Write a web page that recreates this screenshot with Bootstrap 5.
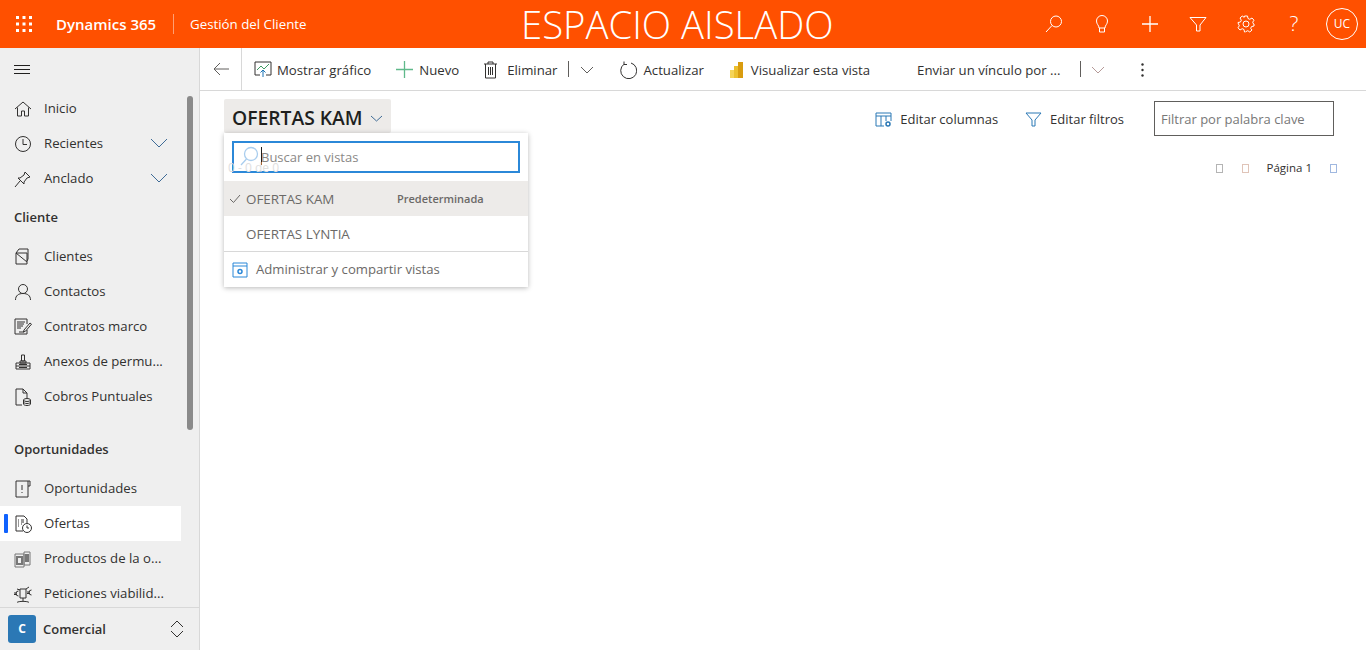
<!DOCTYPE html>
<html lang="es">
<head>
    <meta charset="UTF-8">
    <meta name="viewport" content="width=device-width, initial-scale=1.0">
    <title>Ofertas</title>
    <link href="https://cdn.jsdelivr.net/npm/bootstrap@5.3.0/dist/css/bootstrap.min.css" rel="stylesheet">
    <style>
        html, body { height: 100%; overflow: hidden; }
        body { font-family: "Open Sans", "Noto Sans", sans-serif; font-size: 13px; color: #323130; background: #fff; }
        svg { display: block; flex: none; fill: none; stroke: currentColor; stroke-width: 1; }
        .shell { height: 650px; }

        .topbar { height: 48px; background: #ff5000; color: #fff; flex: none; }
        .waffle { width: 48px; margin-right: 8px; }
        .brand { font-size: 15px; font-weight: 600; width: 117px; white-space: nowrap; }
        .brand-sep { width: 1px; height: 20px; background: rgba(255,255,255,.45); }
        .appname { font-size: 13.3px; margin-left: 16px; width: 331px; padding-top: 1px; white-space: nowrap; }
        .banner { font-size: 38.3px; font-weight: 300; line-height: 48px; white-space: nowrap; }
        .topicon { width: 48px; height: 48px; display: flex; align-items: center; justify-content: center; }
        .avatar { width: 32px; height: 32px; border: 1px solid #fff; border-radius: 50%; font-size: 12px; display: flex; align-items: center; justify-content: center; margin-left: 8px; }

        .sidebar { width: 200px; background: #efefef; border-right: 1px solid #d8d8d8; flex: none; position: relative; }
        .side-scroll { flex: 1; overflow: hidden; }
        .burger { height: 43px; padding-left: 14px; color: #201f1e; }
        .side-row { height: 35px; width: 181px; padding-left: 14px; font-size: 13.2px; color: #323130; position: relative; white-space: nowrap; }
        .side-row svg.ico { width: 20px; height: 20px; margin-right: 11px; margin-left: -1px; color: #323130; }
        .side-row .chev { position: absolute; right: 13px; top: 11px; color: #3f6b96; }
        .side-row.active { background: #fff; }
        .side-row.active::before { content: ""; position: absolute; left: 4px; top: 8px; width: 4px; height: 19px; background: #0f62fe; border-radius: 1px; }
        .side-head { font-weight: 600; font-size: 13px; padding-left: 14px; color: #323130; line-height: 18px; margin-bottom: 13px; }
        .side-thumb { position: absolute; left: 187px; top: 48px; width: 6px; height: 334px; background: #8a8a8a; border-radius: 3px; }
        .side-foot { height: 43px; border-top: 1px solid #d8d8d8; padding-left: 8px; flex: none; background: #efefef; }
        .area-tile { width: 28px; height: 28px; background: #2b78b5; color: #fff; font-weight: 700; font-size: 12px; border-radius: 3px; display: flex; align-items: center; justify-content: center; margin-right: 7px; }
        .area-name { font-weight: 600; font-size: 13px; color: #323130; padding-top: 1px; }

        .cmdbar { height: 43px; border-bottom: 1px solid #d8d8d8; flex: none; color: #323130; }
        .backbtn { width: 42px; height: 42px; border-right: 1px solid #d8d8d8; color: #605e5c; }
        .cmd { display: flex; align-items: center; height: 42px; white-space: nowrap; padding-top: 1px; font-size: 13.2px; }
        .cmd-label { padding-top: 3px; }
        .cmd-sep { width: 1px; height: 16px; background: #605e5c; }

        .viewbar { height: 46px; padding-left: 24px; position: relative; }
        .view-title { height: 34px; width: 167px; background: #edebe9; border-radius: 2px; padding-left: 8px; padding-top: 4px; margin-top: 8px; font-size: 19.3px; font-weight: 600; color: #201f1e; white-space: nowrap; }
        .tool { display: flex; align-items: center; color: #323130; white-space: nowrap; }
        .tool span { padding-top: 1px; }
        .kw-box { width: 180px; height: 35px; border: 1px solid #605e5c; padding: 2px 6px 0; font-size: 13px; color: #777; margin-left: 30px; margin-top: 10px; margin-right: 32px; }
        .pager-row { height: 30px; font-size: 11.5px; position: relative; z-index: 5; margin-top: 16px; padding-left: 28px; pointer-events: none; }
        .count { color: #dedede; font-size: 12px; }
        .tofu { display: inline-block; width: 7px; height: 9px; border: 1px solid #b4b4b4; }

        .views-menu { position: absolute; left: 224px; top: 133px; width: 304px; height: 154px; background: #fff; box-shadow: 0 1px 5px rgba(0,0,0,.28); z-index: 4; color: #6b6967; }
        .views-search { margin: 8px 8px 0; height: 32px; border: 2px solid #2b88d8; position: relative; padding-left: 27px; padding-top: 2px; color: #8a8886; font-size: 13px; }
        .views-search::before { content: ""; position: absolute; left: 27px; top: 4px; width: 1px; height: 18px; background: #201f1e; }
        .view-opt { height: 35px; padding-left: 22px; padding-top: 2px; position: relative; font-size: 13.4px; }
        .view-opt.current { background: #edebe9; margin-top: 8px; }
        .view-tag { position: absolute; left: 173px; font-size: 11px; font-weight: 600; }
        .menu-foot { border-top: 1px solid #d8d8d8; height: 36px; padding-left: 8px; padding-top: 1px; font-size: 13.15px; }
    </style>
</head>
<body>
<div class="shell d-flex flex-column">

    <header class="topbar d-flex align-items-center">
        <div class="waffle d-flex justify-content-center">
            <svg width="16" height="16" viewBox="0 0 16 16" style="stroke:none;fill:#fff">
                <rect x="0" y="0" width="3" height="3"/><rect x="6.5" y="0" width="3" height="3"/><rect x="13" y="0" width="3" height="3"/>
                <rect x="0" y="6.5" width="3" height="3"/><rect x="6.5" y="6.5" width="3" height="3"/><rect x="13" y="6.5" width="3" height="3"/>
                <rect x="0" y="13" width="3" height="3"/><rect x="6.5" y="13" width="3" height="3"/><rect x="13" y="13" width="3" height="3"/>
            </svg>
        </div>
        <div class="brand">Dynamics 365</div>
        <div class="brand-sep"></div>
        <div class="appname">Gestión del Cliente</div>
        <div class="banner">ESPACIO AISLADO</div>
        <div class="d-flex align-items-center ms-auto me-2">
            <div class="topicon"><svg width="20" height="20" viewBox="0 0 20 20"><circle cx="12" cy="7.500" r="5.500"/><path d="M8 11.500 2 18"/></svg></div>
            <div class="topicon"><svg width="20" height="20" viewBox="0 0 20 20"><path d="M7 14c0-3-2.500-3.500-2.500-7a5.500 5.500 0 0 1 11 0c0 3.500-2.500 4-2.500 7zM7.500 14v4h5v-4"/></svg></div>
            <div class="topicon"><svg width="18" height="18" viewBox="0 0 18 18" style="stroke-width:1.300"><path d="M9 1v16M1 9h16"/></svg></div>
            <div class="topicon"><svg width="18" height="18" viewBox="0 0 18 18"><path d="M1 2.500h16L11 10v6H7.500v-6z"/></svg></div>
            <div class="topicon"><svg width="18" height="18" viewBox="0 0 18 18"><circle cx="9" cy="9" r="3"/><path d="M7.500 1h3l.5 2.500 1.800.8L15 3l2 2.200-1.300 2 .8 1.800H17l0 2-2.500.6-.8 1.700L15 15l-2.200 2-2-1.300-1.800.8L8.500 17h-1l-.5-2.500-1.800-.8L3 15l-2-2.200 1.300-2-.8-1.800L1 8V7.500l2.500-.5.800-1.800L3 3l2.200-2 2 1.300z" stroke-linejoin="round"/></svg></div>
            <div class="topicon" style="font-size:21px;font-weight:300">?</div>
            <div class="avatar">UC</div>
        </div>
    </header>

    <div class="d-flex flex-grow-1" style="min-height:0">
        <nav class="sidebar d-flex flex-column">
            <div class="side-scroll">
                <div class="burger d-flex align-items-center">
                    <svg width="16" height="12" viewBox="0 0 16 12"><path d="M0 1.500h16M0 5.500h16M0 9.500h16"/></svg>
                </div>
                <div class="side-row d-flex align-items-center"><svg class="ico" viewBox="0 0 20 20"><path d="M2 10 10 3l8 7M4.500 8.500V17h4v-5h3v5h4V8.500"/></svg>Inicio</div>
                <div class="side-row d-flex align-items-center"><svg class="ico" viewBox="0 0 20 20"><circle cx="10" cy="10" r="7.500"/><path d="M10 5v5.500h4"/></svg>Recientes
                    <svg class="chev" width="18" height="12" viewBox="0 0 18 12"><path d="M1 2l8 8 8-8"/></svg></div>
                <div class="side-row d-flex align-items-center"><svg class="ico" viewBox="0 0 20 20"><path d="M12 3l5 5-3 1-3 4 0 2-6-6 2 0 4-3zM7 12l-5 6"/></svg>Anclado
                    <svg class="chev" width="18" height="12" viewBox="0 0 18 12"><path d="M1 2l8 8 8-8"/></svg></div>
                <div class="side-head" style="margin-top:12px">Cliente</div>
                <div class="side-row d-flex align-items-center"><svg class="ico" viewBox="0 0 20 20"><path d="M3 6h11v11H3zM3 6l3-4h9v10l-1 2M3 6l11 9"/></svg>Clientes</div>
                <div class="side-row d-flex align-items-center"><svg class="ico" viewBox="0 0 20 20"><circle cx="10" cy="7" r="4.500"/><path d="M2.500 18c0-4.500 3-6.500 7.500-6.500s7.500 2 7.500 6.500"/></svg>Contactos</div>
                <div class="side-row d-flex align-items-center"><svg class="ico" viewBox="0 0 20 20"><path d="M14 13v4H2V2h12v5M4 5h8M4 7h7M4 9h6M4 11h4M6 15h5M11 13l6-7 1.500 1.200-6 7-2 .8z"/></svg>Contratos marco</div>
                <div class="side-row d-flex align-items-center"><svg class="ico" viewBox="0 0 20 20"><path d="M8.500 3h3v6h-3zM7 9h6v2H7zM3 11h14v6H3zM3 14h14M6 12.500h8M6 15.500h8"/></svg>Anexos de permu...</div>
                <div class="side-row d-flex align-items-center"><svg class="ico" viewBox="0 0 20 20"><path d="M9 18H3V2h7l4 4v5M10 2v4h4"/><ellipse cx="14" cy="13" rx="3.500" ry="1.500"/><path d="M10.500 13v4c0 .8 1.500 1.500 3.500 1.500s3.500-.7 3.500-1.500v-4M10.500 15c0 .8 1.500 1.500 3.500 1.500s3.500-.7 3.500-1.500"/></svg>Cobros Puntuales</div>
                <div class="side-head" style="margin-top:26px">Oportunidades</div>
                <div class="side-row d-flex align-items-center"><svg class="ico" viewBox="0 0 20 20"><path d="M3 2h12v16H3zM15 2h2v5h-2M9 6v5M9 13v1"/></svg>Oportunidades</div>
                <div class="side-row active d-flex align-items-center"><svg class="ico" viewBox="0 0 20 20"><path d="M10 17H3V2h8l3 3v4M5 6h1M5 8h1M5 10h1M5 12h1M8 6h3M8 8h3M8 10h1"/><circle cx="14" cy="14" r="4.500"/><path d="M14 11.500V14h2"/></svg>Ofertas</div>
                <div class="side-row d-flex align-items-center"><svg class="ico" style="color:#777" viewBox="0 0 20 20"><path d="M2 5h9v13H2zM11 3h6v13h-6z"/><path d="M4 8h5v7H4zM13 5v8M15 5v8" style="stroke-width:2"/></svg>Productos de la o...</div>
                <div class="side-row d-flex align-items-center"><svg class="ico" viewBox="0 0 20 20"><path d="M7 5h6v9H7zM10 14v3M4 18.500c1-1.500 11-1.500 12 0M13 5l3-2M7 6 4 5M5.500 7a2.500 2.500 0 1 0 0 5M1 9h3M1 10.500h3M18.500 6a2.500 2.500 0 1 0 0 5M14 8h3M14 9.500h3"/></svg>Peticiones viabilid...</div>
            </div>
            <div class="side-thumb"></div>
            <div class="side-foot d-flex align-items-center">
                <div class="area-tile">C</div>
                <div class="area-name">Comercial</div>
                <svg class="ms-auto" style="margin-right:15px" width="14" height="18" viewBox="0 0 14 18"><path d="M1 7l6-6 6 6M1 11l6 6 6-6"/></svg>
            </div>
        </nav>

        <main class="flex-grow-1 position-relative" style="min-width:0">
            <div class="cmdbar d-flex align-items-center">
                <div class="backbtn d-flex align-items-center justify-content-center">
                    <svg width="16" height="14" viewBox="0 0 16 14"><path d="M7 1 1 7l6 6M1 7h15"/></svg>
                </div>
                <div class="cmd" style="margin-left:12px">
                    <svg width="18" height="17" viewBox="0 0 18 17" style="margin-right:5px"><path d="M6 14H1V1h16v13h-5"/><path d="M3 9l4-4 3 3 5-5" stroke="#3f9b63"/><path d="M9 16V9M6.500 11.500 9 9l2.500 2.500" stroke="#1a73b5"/></svg><span class="cmd-label">Mostrar gráfico</span></div>
                <div class="cmd" style="margin-left:25px">
                    <svg width="17" height="17" viewBox="0 0 17 17" style="margin-right:6px;stroke:#5fb98a;stroke-width:1.300"><path d="M8.500 0v17M0 8.500h17"/></svg><span class="cmd-label">Nuevo</span></div>
                <div class="cmd" style="margin-left:24px">
                    <svg width="15" height="18" viewBox="0 0 15 18" style="margin-right:9px"><path d="M1 3h13M5 3V1h5v2M2.500 3v14h10V3M5.500 6v8M7.500 6v8M9.500 6v8"/></svg><span class="cmd-label">Eliminar</span></div>
                <div class="cmd-sep" style="margin-left:10px"></div>
                <div class="cmd" style="margin-left:11px"><svg width="14" height="8" viewBox="0 0 14 8" style="color:#605e5c"><path d="M1 1l6 6 6-6"/></svg></div>
                <div class="cmd" style="margin-left:25px">
                    <svg width="18" height="18" viewBox="0 0 18 18" style="margin-right:7px"><path d="M5 3.200A8 8 0 1 0 12 2M5 .5V3.500H8"/></svg><span class="cmd-label">Actualizar</span></div>
                <div class="cmd" style="margin-left:26px">
                    <svg width="13" height="16" viewBox="0 0 13 16" style="margin-right:8px;stroke:none"><rect x="0" y="8" width="5" height="8" fill="#f5d458"/><rect x="4" y="4" width="5" height="12" fill="#ecc02f"/><rect x="8" y="0" width="5" height="16" fill="#d99c0f"/></svg><span class="cmd-label">Visualizar esta vista</span></div>
                <div class="cmd" style="margin-left:47px"><span class="cmd-label">Enviar un vínculo por ...</span></div>
                <div class="cmd-sep" style="margin-left:19px"></div>
                <div class="cmd" style="margin-left:10px"><svg width="14" height="8" viewBox="0 0 14 8" style="color:#b59a98"><path d="M1 1l6 6 6-6"/></svg></div>
                <div class="cmd" style="margin-left:36px"><svg width="3" height="14" viewBox="0 0 3 14" style="stroke:none;fill:#323130"><circle cx="1.500" cy="1.500" r="1.200"/><circle cx="1.500" cy="7" r="1.200"/><circle cx="1.500" cy="12.500" r="1.200"/></svg></div>
            </div>

            <div class="viewbar d-flex align-items-start">
                <div class="view-title d-flex align-items-center">OFERTAS KAM
                    <svg style="margin-left:7px" width="13" height="7" viewBox="0 0 13 7" color="#3f6b96"><path d="M1 1l5.500 5L12 1"/></svg></div>
                <div class="tool ms-auto" style="margin-top:18px">
                    <svg width="17" height="15" viewBox="0 0 17 15" style="margin-right:8px;color:#2b78b5"><path d="M9 14H1V1h15v8M1 4h15M6 4v10M11 4v5"/><circle cx="13" cy="12" r="2" stroke-width="1.500"/></svg><span>Editar columnas</span></div>
                <div class="tool" style="margin-left:27px;margin-top:18px">
                    <svg width="17" height="15" viewBox="0 0 17 15" style="margin-right:8px;color:#2b78b5"><path d="M1 1h15l-6 7v6H7V8z"/></svg><span>Editar filtros</span></div>
                <div class="kw-box d-flex align-items-center">Filtrar por palabra clave</div>
            </div>

            <div class="pager-row d-flex align-items-center">
                <span class="count">0 - 0 de 0</span>
                <span class="tofu ms-auto"></span>
                <span class="tofu" style="margin-left:19px;border-color:#e0c4b8"></span>
                <span style="margin-left:18px">Página 1</span>
                <span class="tofu" style="margin-left:18px;margin-right:29px;border-color:#a0b8e0"></span>
            </div>
        </main>
    </div>

    <div class="views-menu">
        <div class="views-search d-flex align-items-center">
            <svg width="20" height="22" viewBox="0 0 20 22" style="position:absolute;left:6px;top:2px;color:#a9cdee;stroke-width:1.300"><circle cx="11" cy="9" r="6.500"/><path d="M6.500 14 1 20"/></svg>
            Buscar en vistas
        </div>
        <div class="view-opt current d-flex align-items-center">
            <svg width="12" height="10" viewBox="0 0 12 10" style="position:absolute;left:5px;top:13px"><path d="M1 5l3.500 3.500L11 1"/></svg>
            OFERTAS KAM<span class="view-tag">Predeterminada</span>
        </div>
        <div class="view-opt d-flex align-items-center">OFERTAS LYNTIA</div>
        <div class="menu-foot d-flex align-items-center">
            <svg width="16" height="16" viewBox="0 0 16 16" style="margin-right:8px;color:#2b88d8"><path d="M1 1h14v14H1zM1 4h14"/><circle cx="8" cy="9.500" r="2" stroke-width="1.500"/></svg>
            Administrar y compartir vistas
        </div>
    </div>
</div>
</body>
</html>
